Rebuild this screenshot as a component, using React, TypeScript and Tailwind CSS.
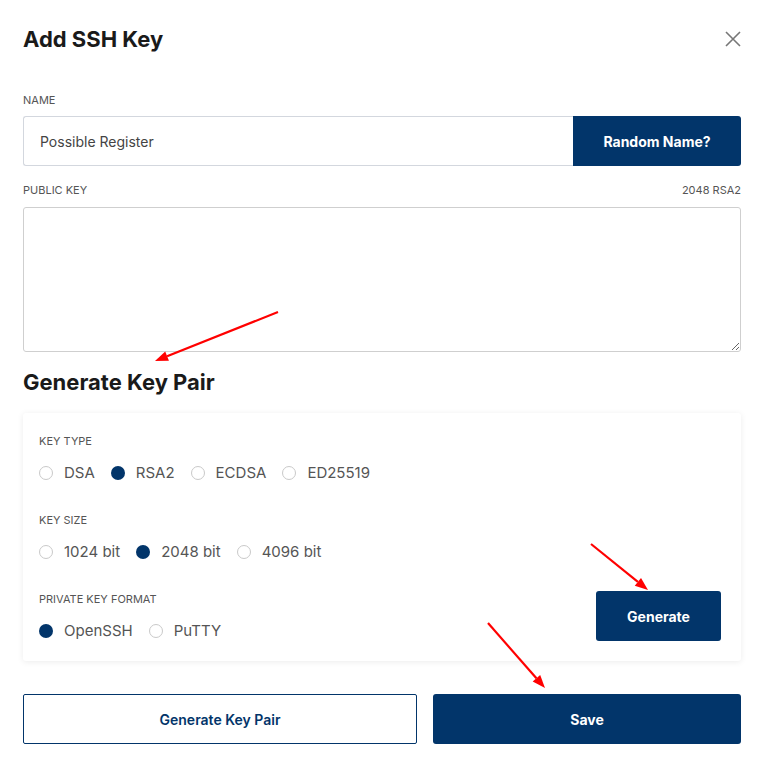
import { FC } from "react";

const navy = "bg-[#02356a]";

type RadioProps = { label: string; checked?: boolean };

const Radio: FC<RadioProps> = ({ label, checked }) => (
    <label className="flex items-center h-5 gap-[11px]">
        {checked ? (
            <span className="w-[14px] h-[14px] rounded-full bg-[#02356a]" />
        ) : (
            <span className="w-[14px] h-[14px] rounded-full border border-[#c9c9c9] bg-white" />
        )}
        <span className="text-[15px] text-[#555]">{label}</span>
    </label>
);

type GroupProps = { title: string; options: { label: string; checked?: boolean }[] };

const RadioGroup: FC<GroupProps> = ({ title, options }) => (
    <div className="flex flex-col">
        <div className="h-4 leading-4 text-[11px] uppercase text-[#555]">{title}</div>
        <div className="flex items-center gap-[16px] mt-[14px]">
            {options.map((o) => (
                <Radio key={o.label} label={o.label} checked={o.checked} />
            ))}
        </div>
    </div>
);

const Arrow: FC<{ x1: number; y1: number; x2: number; y2: number }> = ({ x1, y1, x2, y2 }) => {
    const a = Math.atan2(y2 - y1, x2 - x1);
    const len = 13;
    const w = 5;
    const bx = x2 - len * Math.cos(a);
    const by = y2 - len * Math.sin(a);
    const p1 = `${bx + w * Math.sin(a)},${by - w * Math.cos(a)}`;
    const p2 = `${bx - w * Math.sin(a)},${by + w * Math.cos(a)}`;
    return (
        <g>
            <line x1={x1} y1={y1} x2={bx} y2={by} stroke="#f00" strokeWidth={2.2} />
            <polygon points={`${x2},${y2} ${p1} ${p2}`} fill="#f00" />
        </g>
    );
};

export default function App() {
    return (
        <div className="relative w-[759px] min-h-[772px] bg-white font-['Inter','Noto_Sans',sans-serif] text-[#222]">
            <div className="pl-[23px] pr-[18px] pt-[25px] pb-[28px] flex flex-col">
                <div className="flex items-center justify-between h-7">
                    <h1 className="text-[22px] font-bold text-[#1a1a1a] leading-7">Add SSH Key</h1>
                    <svg width="16" height="16" viewBox="0 0 16 16">
                        <path d="M1 1 L15 15 M15 1 L1 15" stroke="#777" strokeWidth="1.6" fill="none" />
                    </svg>
                </div>

                <div className="mt-[39px] h-4 leading-4 text-[11px] uppercase text-[#555]">Name</div>
                <div className="mt-2 flex h-[50px]">
                    <div className="flex-1 flex items-center border border-r-0 border-[#d3d7de] rounded-l-[3px] pl-4 text-[14px] text-[#444]">
                        Possible Register
                    </div>
                    <button className={`w-[168px] ${navy} rounded-r-[3px] text-white text-[14px] font-bold`}>
                        Random Name?
                    </button>
                </div>

                <div className="mt-4 flex justify-between h-4 leading-4 text-[11px] uppercase text-[#555]">
                    <span>Public Key</span>
                    <span>2048 RSA2</span>
                </div>
                <textarea className="mt-[9px] h-[145px] w-full border border-[#cfcfcf] rounded-[3px] resize-y outline-none" />

                <h2 className="mt-4 text-[22px] font-bold text-[#1a1a1a] leading-7">Generate Key Pair</h2>

                <div className="mt-[17px] rounded-[3px] shadow-[0_1px_6px_rgba(0,0,0,0.08)] pl-4 pr-5 pt-5 pb-5 flex justify-between items-end">
                    <div className="flex flex-col gap-[29px]">
                        <RadioGroup
                            title="Key Type"
                            options={[{ label: "DSA" }, { label: "RSA2", checked: true }, { label: "ECDSA" }, { label: "ED25519" }]}
                        />
                        <RadioGroup
                            title="Key Size"
                            options={[{ label: "1024 bit" }, { label: "2048 bit", checked: true }, { label: "4096 bit" }]}
                        />
                        <RadioGroup
                            title="Private Key Format"
                            options={[{ label: "OpenSSH", checked: true }, { label: "PuTTY" }]}
                        />
                    </div>
                    <button className={`w-[125px] h-[50px] ${navy} rounded-[3px] text-white text-[14px] font-bold`}>
                        Generate
                    </button>
                </div>

                <div className="mt-[33px] flex gap-4">
                    <button className="w-[394px] h-[50px] border border-[#02356a] rounded-[2px] text-[#02356a] text-[14px] font-semibold">
                        Generate Key Pair
                    </button>
                    <button className={`flex-1 h-[50px] ${navy} rounded-[3px] text-white text-[14px] font-bold`}>
                        Save
                    </button>
                </div>
            </div>

            <svg className="absolute inset-0 pointer-events-none" width="759" height="772">
                <Arrow x1={278} y1={312} x2={155} y2={361} />
                <Arrow x1={591} y1={544} x2={648} y2={590} />
                <Arrow x1={488} y1={623} x2={545} y2={688} />
            </svg>
        </div>
    );
}
